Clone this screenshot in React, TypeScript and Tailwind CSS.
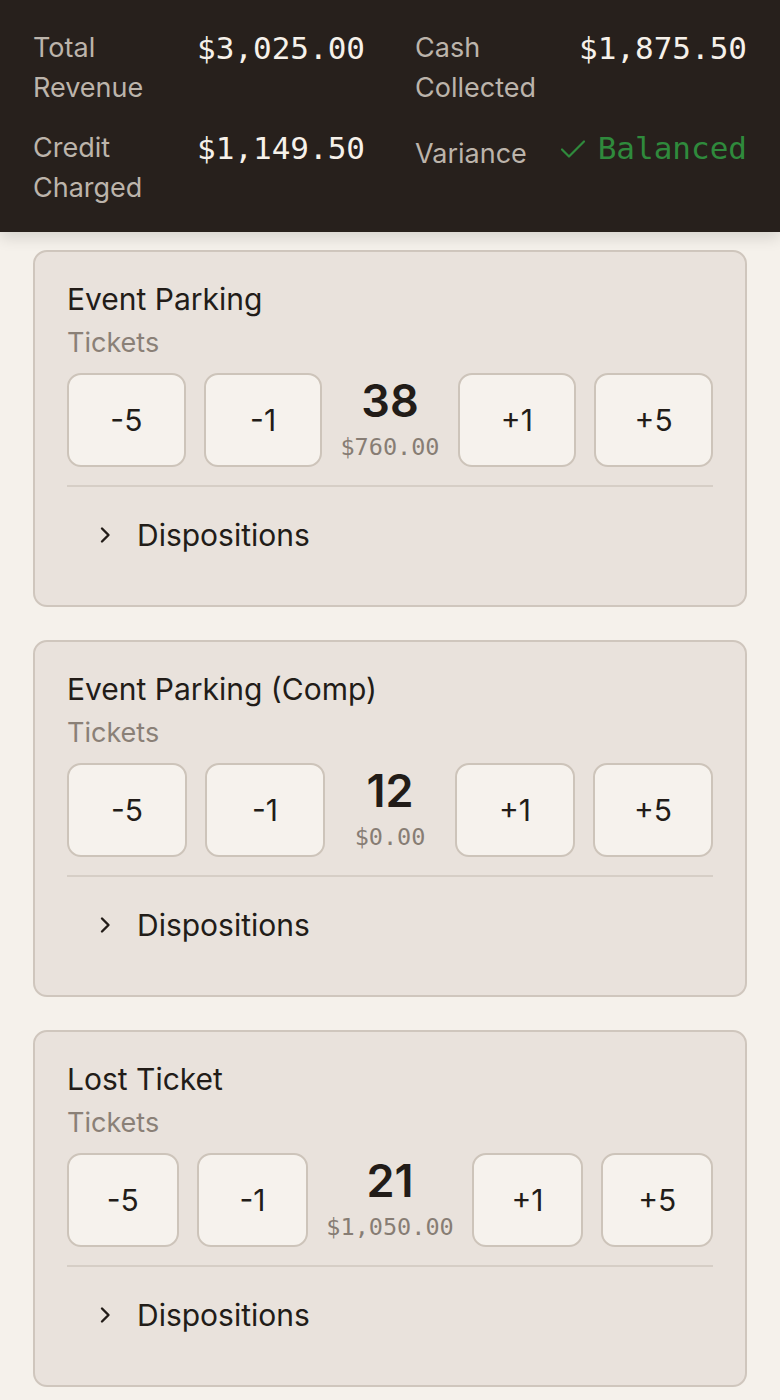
import React from "react";

type Product = {
  name: string;
  count: number;
  amount: string;
};

const PRODUCTS: Product[] = [
  { name: "Event Parking", count: 38, amount: "$760.00" },
  { name: "Event Parking (Comp)", count: 12, amount: "$0.00" },
  { name: "Lost Ticket", count: 21, amount: "$1,050.00" },
];

const sans = "font-['Inter','Noto_Sans',sans-serif]";
const mono = "font-['DejaVu_Sans_Mono','Liberation_Mono',monospace]";

export default function App() {
  return (
    <div className={`min-h-[1400px] bg-[#f5f1eb] ${sans}`}>
      {/* Summary header */}
      <header className="relative z-10 bg-[#27201c] px-[33px] pt-[28px] pb-[24px] shadow-[0_6px_14px_rgba(0,0,0,0.12)]">
        <div className="grid grid-cols-2 gap-x-[50px] gap-y-[20px]">
          <Stat label="Total Revenue" value="$3,025.00" />
          <Stat label="Cash Collected" value="$1,875.50" />
          <Stat label="Credit Charged" value="$1,149.50" />
          <div className="flex items-start justify-between">
            <span className="pt-[6px] text-[27px] leading-[40px] text-[#bcb4ab]">Variance</span>
            <span className="flex items-center gap-[12px] text-[#2f8a3c]">
              <svg width="26" height="20" viewBox="0 0 26 20" fill="none" className="mt-[2px]">
                <path d="M2 10.5 9 17.5 24 2.5" stroke="currentColor" strokeWidth="2.2" strokeLinecap="round" strokeLinejoin="round" />
              </svg>
              <span className={`${mono} text-[31px] leading-[40px]`}>Balanced</span>
            </span>
          </div>
        </div>
      </header>

      {/* Product counters */}
      <main className="flex flex-col gap-[33px] px-[33px] pt-[18px] pb-[20px]">
        {PRODUCTS.map((p) => (
          <ProductCard key={p.name} product={p} />
        ))}
      </main>
    </div>
  );
}

function Stat({ label, value }: { label: string; value: string }) {
  const [first, second] = label.split(" ");
  return (
    <div className="flex items-start justify-between">
      <span className="text-[27px] leading-[40px] text-[#bcb4ab]">
        {first}
        <br />
        {second}
      </span>
      <span className={`${mono} text-[31px] leading-[40px] text-[#f6f1ea]`}>{value}</span>
    </div>
  );
}

function ProductCard({ product }: { product: Product }) {
  return (
    <section className="rounded-[14px] border-2 border-[#cfc6bd] bg-[#e9e2dc] px-[32px] pt-[27px] pb-[31px]">
      <h2 className="text-[30px] leading-[40px] text-[#221c18]">{product.name}</h2>
      <p className="mt-[6px] text-[27px] leading-[36px] text-[#8a8077]">Tickets</p>

      <div className="mt-[12px] flex items-stretch gap-[18px]">
        <StepButton label="-5" />
        <StepButton label="-1" />
        <div className="flex min-w-[94px] flex-col items-center justify-center">
          <span className="text-[45px] font-semibold leading-[44px] text-[#221c18]">{product.count}</span>
          <span className={`${mono} mt-[10px] text-[23.5px] leading-[28px] text-[#877d74]`}>{product.amount}</span>
        </div>
        <StepButton label="+1" />
        <StepButton label="+5" />
      </div>

      <div className="mt-[18px] border-t-2 border-[#d6cec6]" />

      <button className="flex w-full items-center gap-[18px] pl-[24px] pt-[28px] pb-[19px] text-left">
        <span className="flex w-[28px] justify-center text-[#221c18]">
          <svg width="12" height="18" viewBox="0 0 12 18" fill="none">
            <path d="M3 2.5 9.5 9 3 15.5" stroke="currentColor" strokeWidth="2.4" strokeLinecap="round" strokeLinejoin="round" />
          </svg>
        </span>
        <span className="text-[30px] leading-[40px] text-[#221c18]">Dispositions</span>
      </button>
    </section>
  );
}

function StepButton({ label }: { label: string }) {
  return (
    <button className="flex h-[94px] flex-1 items-center justify-center rounded-[14px] border-2 border-[#cdc4ba] bg-[#f6f2ed] text-[30px] text-[#221c18]">
      {label}
    </button>
  );
}
